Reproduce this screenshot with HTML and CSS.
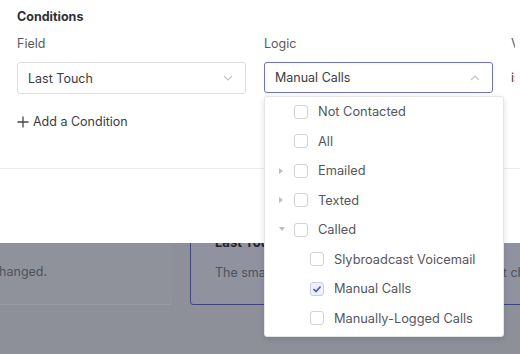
FILE: index.html
```html
<!DOCTYPE html>
<html>
<head>
<meta charset="utf-8">
<link rel="stylesheet" href="styles.css">
</head>
<body>
<div class="page">
  <div class="card card-a">
    <div class="card-title">Static</div>
    <div class="card-text">The list stays as it is unless changed.</div>
  </div>
  <div class="card card-b">
    <div class="card-title">Last Touch</div>
    <div class="card-text">The smart list updates automatically at any time it changes.</div>
  </div>
</div>

<div class="modal">
  <div class="modal-body">
    <div class="section-title">Conditions</div>
    <div class="cond-grid">
      <div class="col">
        <div class="label">Field</div>
        <div class="select">
          <span>Last Touch</span>
          <svg class="chev" width="10" height="6" viewBox="0 0 10 6"><polyline points="1,1 5,5 9,1" fill="none" stroke="#c4c4c4" stroke-width="1.1"/></svg>
        </div>
        <div class="add"><svg class="plus" width="12" height="12" viewBox="0 0 12 12"><path d="M6 0.5V11.5M0.5 6H11.5" stroke="#45464c" stroke-width="1.3" fill="none"/></svg>Add a Condition</div>
      </div>
      <div class="col logic">
        <div class="label">Logic</div>
        <div class="select focused">
          <span>Manual Calls</span>
          <svg class="chev" width="10" height="6" viewBox="0 0 10 6"><polyline points="1,5 5,1 9,5" fill="none" stroke="#c4c4c4" stroke-width="1.1"/></svg>
        </div>
        <div class="menu">
          <div class="row"><span class="caret"></span><span class="box"></span><span>Not Contacted</span></div>
          <div class="row"><span class="caret"></span><span class="box"></span><span>All</span></div>
          <div class="row"><span class="caret"><svg width="5" height="6" viewBox="0 0 5 6"><polygon points="0,0 4,3 0,6" fill="#bdbdbd"/></svg></span><span class="box"></span><span>Emailed</span></div>
          <div class="row"><span class="caret"><svg width="5" height="6" viewBox="0 0 5 6"><polygon points="0,0 4,3 0,6" fill="#bdbdbd"/></svg></span><span class="box"></span><span>Texted</span></div>
          <div class="row"><span class="caret"><svg width="6" height="5" viewBox="0 0 6 5"><polygon points="0,0 6,0 3,4" fill="#bdbdbd"/></svg></span><span class="box"></span><span>Called</span></div>
          <div class="row child"><span class="box"></span><span>Slybroadcast Voicemail</span></div>
          <div class="row child"><span class="box checked"><svg width="10" height="8" viewBox="0 0 10 8"><polyline points="1.5,4 4,6.5 8.5,1.5" fill="none" stroke="#4b55b5" stroke-width="1.6"/></svg></span><span>Manual Calls</span></div>
          <div class="row child"><span class="box"></span><span>Manually-Logged Calls</span></div>
        </div>
      </div>
      <div class="col value-col">
        <div class="label">Value</div>
        <div class="value-text">is</div>
      </div>
    </div>
  </div>
  <div class="modal-footer"></div>
</div>
</body>
</html>
```

FILE: styles.css
```css
* { box-sizing: border-box; }

body {
  margin: 0;
  width: 520px;
  height: 354px;
  overflow: hidden;
  position: relative;
  background: #8d8f99;
  font-family: Inter, "Noto Sans", sans-serif;
  font-size: 12.5px;
}

/* underlying (dimmed) page */
.page {
  display: flex;
  gap: 18px;
  padding-top: 219px;
  margin-left: -260px;
}

.card {
  flex: none;
  height: 86px;
  padding: 14px 24px 0;
  border-radius: 3px;
  white-space: nowrap;
  overflow: hidden;
}

.card-a {
  width: 432px;
  background: #8f919b;
  border-bottom: 1px solid #9a9ca5;
}

.card-b {
  width: 420px;
  background: #9092a0;
  border: 1px solid #3f4380;
}

.card-title {
  font-weight: 700;
  font-size: 13px;
  color: #23252e;
  line-height: 16px;
}

.card-text {
  margin-top: 15px;
  color: #4f515b;
  line-height: 16px;
}

.card-a .card-text { padding-left: 64px; }

/* modal */
.modal {
  position: absolute;
  top: 0;
  left: 0;
  right: 0;
  height: 243px;
  background: #fff;
  display: flex;
  flex-direction: column;
}

.modal-body {
  padding: 9px 17px 0;
  height: 169px;
  border-bottom: 1px solid #ececec;
}

.section-title {
  font-weight: 700;
  color: #2f3036;
  line-height: 16px;
  font-size: 12.5px;
}

.cond-grid {
  display: grid;
  grid-template-columns: 229px 229px 1fr;
  column-gap: 18px;
  margin-top: 11px;
}

.col { position: relative; }

.value-col {
  overflow: hidden;
  width: 4px;
  margin-left: -1px;
  padding-left: 1px;
  box-sizing: content-box;
}

.label {
  color: #5a5b61;
  line-height: 16px;
  margin-bottom: 10px;
  white-space: nowrap;
}

.select {
  height: 32px;
  border: 1px solid #dedede;
  border-radius: 3px;
  display: flex;
  align-items: center;
  justify-content: space-between;
  padding: 0 10px 0 10px;
  color: #3b3c42;
}

.select.focused {
  border-color: #6d72c9;
  height: 31px;
}

.chev { margin-right: 2px; }

.value-text {
  color: #3b3c42;
  line-height: 32px;
}

.add {
  display: flex;
  align-items: center;
  margin-top: 19px;
  color: #3b3c42;
  line-height: 18px;
}

.plus {
  margin-right: 4px;
  flex: none;
}

/* dropdown menu */
.menu {
  position: absolute;
  top: 60px;
  left: 0;
  width: 240px;
  background: #fff;
  border: 1px solid #e6e6e6;
  border-radius: 3px;
  box-shadow: 0 2px 6px rgba(0, 0, 0, 0.12);
  padding-bottom: 3px;
  z-index: 2;
}

.row {
  height: 29.5px;
  display: flex;
  align-items: center;
  padding-left: 14px;
  color: #55565c;
  font-size: 12.8px;
}

.row.child { padding-left: 45px; }

.caret {
  width: 15px;
  display: flex;
  align-items: center;
  justify-content: flex-start;
}

.box {
  width: 14px;
  height: 14px;
  border: 1px solid #d3d3d6;
  border-radius: 3px;
  margin-right: 10px;
  display: flex;
  align-items: center;
  justify-content: center;
  background: #fff;
}

.box.checked {
  background: #eef0fb;
  border-color: #c9ccec;
}

.modal-footer { flex: 1; }
```
